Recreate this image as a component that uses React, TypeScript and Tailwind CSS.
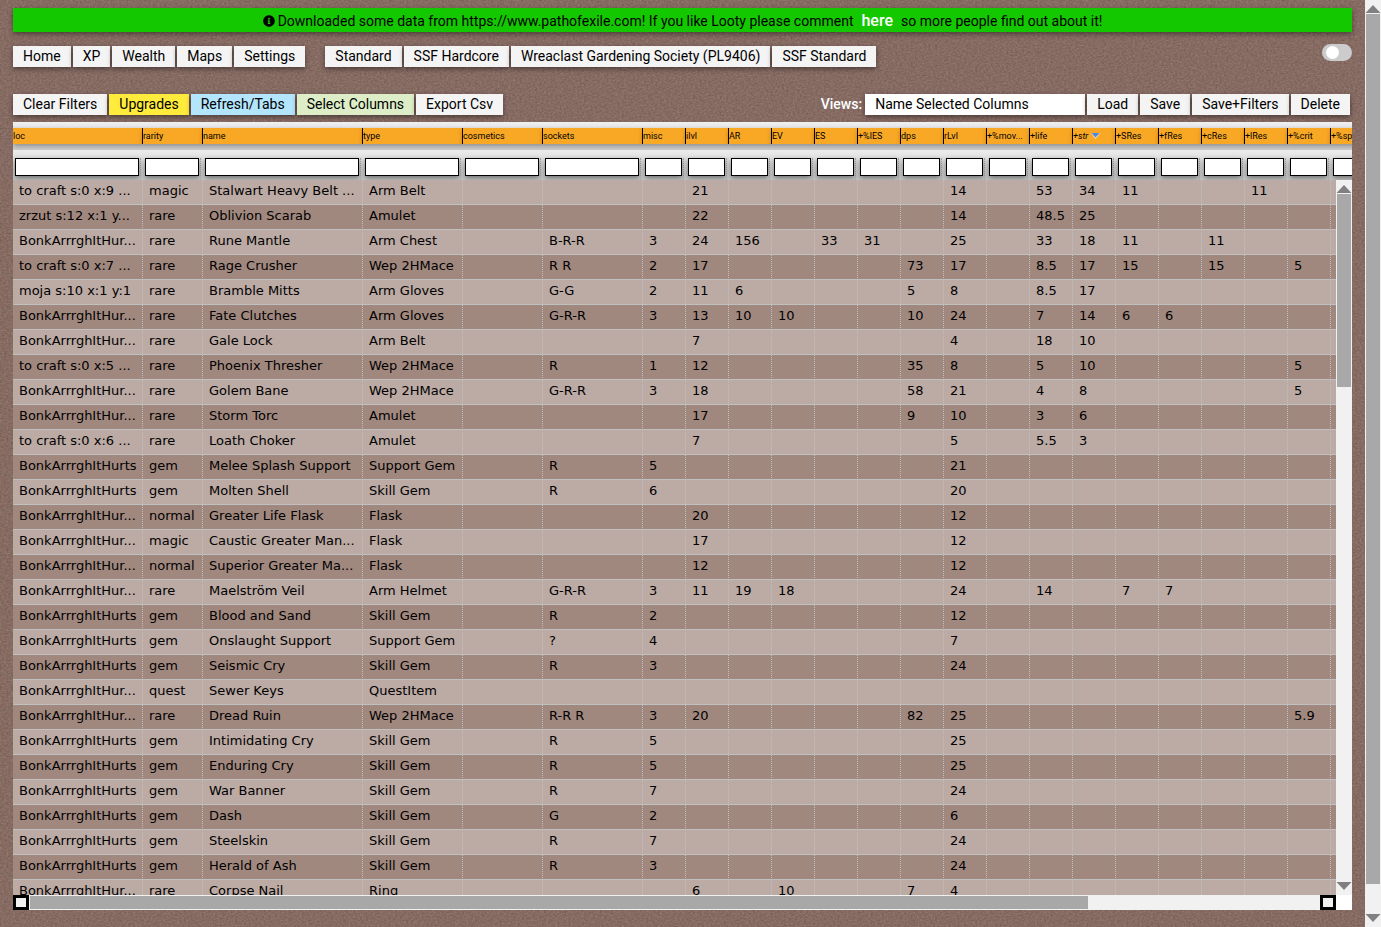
import { FaInfoCircle } from "react-icons/fa";

type Column = { key: string; label: string; width: number; sorted?: boolean };

const columns: Column[] = [
  { key: "loc", label: "loc", width: 130 },
  { key: "rarity", label: "rarity", width: 60 },
  { key: "name", label: "name", width: 160 },
  { key: "type", label: "type", width: 100 },
  { key: "cosmetics", label: "cosmetics", width: 80 },
  { key: "sockets", label: "sockets", width: 100 },
  { key: "misc", label: "misc", width: 43 },
  { key: "ilvl", label: "ilvl", width: 43 },
  { key: "ar", label: "AR", width: 43 },
  { key: "ev", label: "EV", width: 43 },
  { key: "es", label: "ES", width: 43 },
  { key: "pes", label: "+%lES", width: 43 },
  { key: "dps", label: "dps", width: 43 },
  { key: "rlvl", label: "rLvl", width: 43 },
  { key: "mov", label: "+%mov...", width: 43 },
  { key: "life", label: "+life", width: 43 },
  { key: "str", label: "+str", width: 43, sorted: true },
  { key: "sres", label: "+SRes", width: 43 },
  { key: "fres", label: "+fRes", width: 43 },
  { key: "cres", label: "+cRes", width: 43 },
  { key: "lres", label: "+lRes", width: 43 },
  { key: "crit", label: "+%crit", width: 43 },
  { key: "spell", label: "+%sp", width: 43 },
];

type Row = Record<string, string>;

const item = (loc: string, rarity: string, name: string, type: string, stats: Row = {}): Row => ({
  loc,
  rarity,
  name,
  type,
  ...stats,
});

const HURTS = "BonkArrrghItHurts";
const HUR = "BonkArrrghItHur...";

const rows: Row[] = [
  item("to craft s:0 x:9 ...", "magic", "Stalwart Heavy Belt ...", "Arm Belt", { ilvl: "21", rlvl: "14", life: "53", str: "34", sres: "11", lres: "11" }),
  item("zrzut s:12 x:1 y...", "rare", "Oblivion Scarab", "Amulet", { ilvl: "22", rlvl: "14", life: "48.5", str: "25" }),
  item(HUR, "rare", "Rune Mantle", "Arm Chest", { sockets: "B-R-R", misc: "3", ilvl: "24", ar: "156", es: "33", pes: "31", rlvl: "25", life: "33", str: "18", sres: "11", cres: "11" }),
  item("to craft s:0 x:7 ...", "rare", "Rage Crusher", "Wep 2HMace", { sockets: "R R", misc: "2", ilvl: "17", dps: "73", rlvl: "17", life: "8.5", str: "17", sres: "15", cres: "15", crit: "5" }),
  item("moja s:10 x:1 y:1", "rare", "Bramble Mitts", "Arm Gloves", { sockets: "G-G", misc: "2", ilvl: "11", ar: "6", dps: "5", rlvl: "8", life: "8.5", str: "17" }),
  item(HUR, "rare", "Fate Clutches", "Arm Gloves", { sockets: "G-R-R", misc: "3", ilvl: "13", ar: "10", ev: "10", dps: "10", rlvl: "24", life: "7", str: "14", sres: "6", fres: "6" }),
  item(HUR, "rare", "Gale Lock", "Arm Belt", { ilvl: "7", rlvl: "4", life: "18", str: "10" }),
  item("to craft s:0 x:5 ...", "rare", "Phoenix Thresher", "Wep 2HMace", { sockets: "R", misc: "1", ilvl: "12", dps: "35", rlvl: "8", life: "5", str: "10", crit: "5" }),
  item(HUR, "rare", "Golem Bane", "Wep 2HMace", { sockets: "G-R-R", misc: "3", ilvl: "18", dps: "58", rlvl: "21", life: "4", str: "8", crit: "5" }),
  item(HUR, "rare", "Storm Torc", "Amulet", { ilvl: "17", dps: "9", rlvl: "10", life: "3", str: "6" }),
  item("to craft s:0 x:6 ...", "rare", "Loath Choker", "Amulet", { ilvl: "7", rlvl: "5", life: "5.5", str: "3" }),
  item(HURTS, "gem", "Melee Splash Support", "Support Gem", { sockets: "R", misc: "5", rlvl: "21" }),
  item(HURTS, "gem", "Molten Shell", "Skill Gem", { sockets: "R", misc: "6", rlvl: "20" }),
  item(HUR, "normal", "Greater Life Flask", "Flask", { ilvl: "20", rlvl: "12" }),
  item(HUR, "magic", "Caustic Greater Man...", "Flask", { ilvl: "17", rlvl: "12" }),
  item(HUR, "normal", "Superior Greater Ma...", "Flask", { ilvl: "12", rlvl: "12" }),
  item(HUR, "rare", "Maelström Veil", "Arm Helmet", { sockets: "G-R-R", misc: "3", ilvl: "11", ar: "19", ev: "18", rlvl: "24", life: "14", sres: "7", fres: "7" }),
  item(HURTS, "gem", "Blood and Sand", "Skill Gem", { sockets: "R", misc: "2", rlvl: "12" }),
  item(HURTS, "gem", "Onslaught Support", "Support Gem", { sockets: "?", misc: "4", rlvl: "7" }),
  item(HURTS, "gem", "Seismic Cry", "Skill Gem", { sockets: "R", misc: "3", rlvl: "24" }),
  item(HUR, "quest", "Sewer Keys", "QuestItem"),
  item(HUR, "rare", "Dread Ruin", "Wep 2HMace", { sockets: "R-R R", misc: "3", ilvl: "20", dps: "82", rlvl: "25", crit: "5.9" }),
  item(HURTS, "gem", "Intimidating Cry", "Skill Gem", { sockets: "R", misc: "5", rlvl: "25" }),
  item(HURTS, "gem", "Enduring Cry", "Skill Gem", { sockets: "R", misc: "5", rlvl: "25" }),
  item(HURTS, "gem", "War Banner", "Skill Gem", { sockets: "R", misc: "7", rlvl: "24" }),
  item(HURTS, "gem", "Dash", "Skill Gem", { sockets: "G", misc: "2", rlvl: "6" }),
  item(HURTS, "gem", "Steelskin", "Skill Gem", { sockets: "R", misc: "7", rlvl: "24" }),
  item(HURTS, "gem", "Herald of Ash", "Skill Gem", { sockets: "R", misc: "3", rlvl: "24" }),
  item(HUR, "rare", "Corpse Nail", "Ring", { ilvl: "6", ev: "10", dps: "7", rlvl: "4" }),
];

function Button({ children, color = "bg-[#f4f4f4]" }: { children: string; color?: string }) {
  return (
    <button
      type="button"
      className={`h-[21px] px-[10px] text-sm leading-[21px] whitespace-nowrap text-black shadow-[0_2px_5px_rgba(0,0,0,0.45)] ${color}`}
    >
      {children}
    </button>
  );
}

function Arrow({ down = false }: { down?: boolean }) {
  return (
    <svg viewBox="0 0 16 8" className="h-2 w-4 shrink-0" aria-hidden="true">
      <path d={down ? "M0.5 0H15.5L8 8Z" : "M0.5 8H15.5L8 0Z"} fill="#808080" />
    </svg>
  );
}

function VerticalBar({ thumb }: { thumb: string }) {
  return (
    <div className="flex w-4 shrink-0 flex-col bg-[#f1f1f1] pt-[5px] pb-[5px]">
      <Arrow />
      <div className="mt-px min-h-0 flex-1 px-px">
        <div className={`bg-[#a8a8a8] ${thumb}`} />
      </div>
      <Arrow down />
    </div>
  );
}

function Columns() {
  return (
    <colgroup>
      {columns.map((c) => (
        <col key={c.key} style={{ width: c.width }} />
      ))}
    </colgroup>
  );
}

function Backdrop() {
  return (
    <svg className="absolute inset-0 h-full w-full" aria-hidden="true">
      <filter id="weave" x="0" y="0" width="100%" height="100%" colorInterpolationFilters="sRGB">
        <feTurbulence type="fractalNoise" baseFrequency="0.45 0.6" numOctaves="3" seed="4" />
        <feColorMatrix values="0.16 0 0 0 0.445  0.16 0 0 0 0.34  0.16 0 0 0 0.308  0 0 0 0 1" />
      </filter>
      <rect width="100%" height="100%" fill="#846960" />
      <rect width="100%" height="100%" filter="url(#weave)" />
    </svg>
  );
}

export default function App() {
  return (
    <div className="flex h-screen overflow-hidden bg-[#846960] font-['Roboto',sans-serif] text-sm text-black">
      <main className="relative flex min-w-0 flex-1 flex-col px-[13px] pt-2 pb-[17px]">
        <Backdrop />
        <div className="relative flex h-6 shrink-0 items-center justify-center bg-[#14c800] pt-[2px] whitespace-nowrap shadow-[0_2px_5px_rgba(0,0,0,0.45)]">
          <FaInfoCircle className="mr-[3px] size-3" />
          <span>Downloaded some data from https://www.pathofexile.com! If you like Looty please comment</span>
          <a href="#comment" className="mx-2 text-base leading-5 font-medium text-white">
            here
          </a>
          <span>so more people find out about it!</span>
        </div>

        <div className="relative mt-[14px] flex shrink-0 items-start justify-between">
          <nav className="flex gap-5">
            <div className="flex gap-[2px]">
              <Button>Home</Button>
              <Button>XP</Button>
              <Button>Wealth</Button>
              <Button>Maps</Button>
              <Button>Settings</Button>
            </div>
            <div className="flex gap-[2px]">
              <Button>Standard</Button>
              <Button>SSF Hardcore</Button>
              <Button>Wreaclast Gardening Society (PL9406)</Button>
              <Button>SSF Standard</Button>
            </div>
          </nav>
          <button
            type="button"
            role="switch"
            aria-checked="false"
            aria-label="Theme"
            className="-mt-[2px] flex h-[17px] w-[30px] items-center rounded-full bg-[#ccc] px-1"
          >
            <span className="size-[13px] rounded-full bg-white" />
          </button>
        </div>

        <div className="relative mt-[27px] flex shrink-0 justify-between">
          <div className="flex gap-[2px]">
            <Button>Clear Filters</Button>
            <Button color="bg-[#ffeb3b]">Upgrades</Button>
            <Button color="bg-[#b3e5fc]">Refresh/Tabs</Button>
            <Button color="bg-[#dcedc8]">Select Columns</Button>
            <Button>Export Csv</Button>
          </div>
          <div className="flex gap-[2px] pr-[2px]">
            <label htmlFor="view" className="mr-px leading-[21px] font-medium text-white">
              Views:
            </label>
            <input
              id="view"
              defaultValue="Name Selected Columns"
              className="h-[21px] w-[220px] bg-white px-[10px] pb-[2px] text-sm shadow-[0_2px_5px_rgba(0,0,0,0.45)] outline-none"
            />
            <Button>Load</Button>
            <Button>Save</Button>
            <Button>Save+Filters</Button>
            <Button>Delete</Button>
          </div>
        </div>

        <section className="relative mt-[7px] flex min-h-0 flex-1 flex-col">
          <div className="shrink-0 overflow-hidden bg-[#d4d4d4]">
            <table className="w-[1361px] table-fixed border-collapse">
              <Columns />
              <thead>
                <tr className="h-7 bg-linear-to-b from-[#f0f0f0] to-[#cccccc]">
                  {columns.map((c) => (
                    <th key={c.key} scope="col" className="p-0 pt-[6px] pb-[6px] text-left align-top font-normal">
                      <div className="flex h-4 items-center overflow-hidden border-r border-black bg-[#f9a825] text-[9px] leading-4 whitespace-nowrap shadow-[0_2px_5px_rgba(0,0,0,0.35)]">
                        <span className={c.sorted ? "italic" : ""}>{c.label}</span>
                        {c.sorted && (
                          <svg viewBox="0 0 9 6" className="ml-[3px] h-[6px] w-[9px] shrink-0" aria-hidden="true">
                            <path d="M0 0H9L4.5 6Z" fill="#e4e4e4" />
                            <path d="M0.5 0H8.5L4.5 4.6Z" fill="#4f86dc" />
                          </svg>
                        )}
                      </div>
                    </th>
                  ))}
                </tr>
                <tr className="h-[30px] bg-linear-to-b from-[#ececec] to-[#c4c4c4]">
                  {columns.map((c) => (
                    <td key={c.key} className="p-0 pt-2 pr-[2px] align-top">
                      <div className="h-[22px] border-r border-dotted border-[#aaa] pr-px pl-[2px]">
                        <input
                          aria-label={`Filter ${c.label}`}
                          className="block h-[18px] w-full border border-black bg-white px-1 text-xs shadow-[0_2px_5px_rgba(0,0,0,0.45)] outline-none"
                        />
                      </div>
                    </td>
                  ))}
                </tr>
              </thead>
            </table>
          </div>

          <div className="flex min-h-0 flex-1">
            <div className="min-w-0 flex-1 overflow-hidden">
              <table className="w-[1361px] table-fixed border-separate border-spacing-0 font-['Verdana','DejaVu_Sans',sans-serif] text-[13px]">
                <Columns />
                <tbody>
                  {rows.map((row, i) => (
                    <tr key={i} className="odd:bg-[#bcaaa4] even:bg-[#a1887f]">
                      {columns.map((c) => (
                        <td
                          key={c.key}
                          className="h-[25px] overflow-hidden border-r border-b border-r-[silver] border-b-[silver] p-0 pb-[3px] pl-[6px] leading-[21px] whitespace-nowrap [border-right-style:dotted]"
                        >
                          {row[c.key] ?? ""}
                        </td>
                      ))}
                    </tr>
                  ))}
                </tbody>
              </table>
            </div>
            <VerticalBar thumb="h-[28%]" />
          </div>

          <div className="flex h-[15px] shrink-0 bg-white">
            <div className="flex min-w-0 flex-1 bg-[#f1f1f1]">
              <div className="w-4 border-3 border-black" />
              <div className="min-w-0 flex-1 py-px pl-px">
                <div className="h-full w-[82%] bg-[#a8a8a8]" />
              </div>
              <div className="w-4 border-3 border-black" />
            </div>
            <div className="w-4" />
          </div>
        </section>
      </main>
      <VerticalBar thumb="h-[96.7%]" />
    </div>
  );
}
